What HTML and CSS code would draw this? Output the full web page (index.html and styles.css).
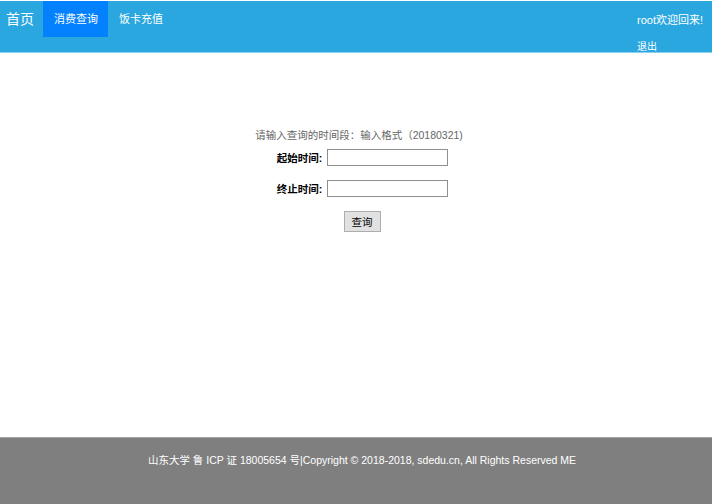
FILE: index.html
```html
<!DOCTYPE html>
<html lang="zh-CN">
<head>
<meta charset="utf-8">
<title>消费查询</title>
<link rel="stylesheet" href="styles.css">
</head>
<body>
<div class="page">
  <header class="topbar">
    <nav class="nav">
      <a class="brand" href="#">首页</a>
      <a class="tab active" href="#">消费查询</a>
      <a class="tab" href="#">饭卡充值</a>
    </nav>
    <div class="user">
      <span class="welcome">root欢迎回来!</span>
      <a class="logout" href="#">退出</a>
    </div>
  </header>
  <main class="main">
    <form class="query">
      <p class="hint">请输入查询的时间段：输入格式（20180321)</p>
      <div class="row"><label class="label">起始时间:</label><input class="field" type="text"></div>
      <div class="row"><label class="label">终止时间:</label><input class="field" type="text"></div>
      <div class="row btnrow"><button class="btn" type="button">查询</button></div>
    </form>
  </main>
  <footer class="footer">
    <p>山东大学 鲁 ICP 证 18005654 号|Copyright © 2018-2018, sdedu.cn, All Rights Reserved ME</p>
  </footer>
</div>
</body>
</html>
```
FILE: styles.css
```css
html, body {
  margin: 0;
  padding: 0;
  background: #fff;
}
body {
  font-family: "Liberation Sans", Arial, "Noto Sans CJK SC", sans-serif;
  font-size: 10.5px;
  color: #000;
}
.page {
  min-height: 504px;
  display: flex;
  flex-direction: column;
}
.topbar {
  margin-top: 1px;
  height: 51px;
  background: #2ba7df;
  border-bottom: 1px solid #8cd0ef;
  display: flex;
  justify-content: space-between;
}
.nav {
  display: flex;
  align-items: flex-start;
}
.brand {
  color: #fff;
  text-decoration: none;
  font-size: 14px;
  line-height: 36px;
  padding: 0 9px 0 6px;
}
.tab {
  color: #fff;
  text-decoration: none;
  font-size: 11px;
  line-height: 36px;
  padding: 0 11px;
}
.tab.active {
  background: #0381fe;
  padding-right: 10px;
}
.user {
  display: flex;
  flex-direction: column;
  width: 75px;
  padding-top: 12px;
  color: #fff;
  font-size: 11px;
}
.welcome {
  line-height: 15px;
}
.logout {
  color: #fff;
  text-decoration: none;
  font-size: 10px;
  margin-top: 12px;
  line-height: 14px;
}
.main {
  flex: 1;
  display: flex;
  justify-content: center;
}
.query {
  margin-top: 75px;
  margin-left: 6px;
  display: flex;
  flex-direction: column;
  align-items: center;
}
.hint {
  margin: 0 0 6px;
  color: #666;
  line-height: 15px;
}
.row {
  display: flex;
  align-items: center;
  margin-bottom: 14px;
  margin-left: 7px;
}
.label {
  font-weight: bold;
  margin-right: 5px;
}
.field {
  box-sizing: border-box;
  width: 121px;
  height: 17px;
  margin: 0;
  padding: 0 2px;
  border: 1px solid #8f8f8f;
  font-size: 11px;
}
.btnrow {
  margin-top: 0;
  margin-left: 6px;
}
.btn {
  box-sizing: border-box;
  width: 37px;
  height: 21px;
  padding: 0;
  background: #e1e1e1;
  border: 1px solid #adadad;
  font-family: inherit;
  font-size: 10.5px;
  color: #000;
}
.footer {
  height: 66px;
  background: #7f7f7f;
  border-top: 1px solid #a3a3a3;
  color: #fff;
  text-align: center;
}
.footer p {
  margin: 15px 0 0;
  padding-left: 12px;
  line-height: 15px;
}
```
